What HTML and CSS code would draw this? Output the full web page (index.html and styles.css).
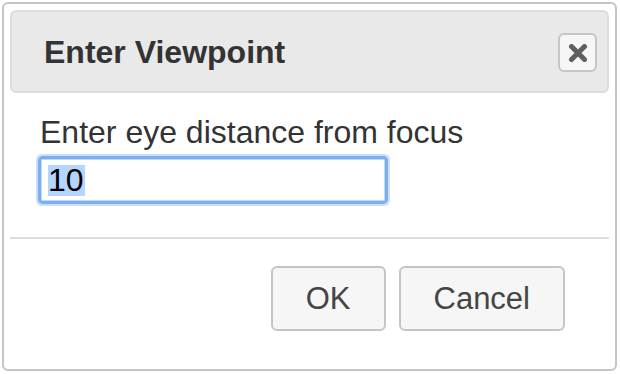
FILE: index.html
```html
<!DOCTYPE html>
<html lang="en">
<head>
  <meta charset="UTF-8" />
  <title>Enter Viewpoint</title>
  <link rel="stylesheet" href="styles.css">
</head>
<body>
  <div class="dialog">
    <div class="titlebar">
      <span class="title">Enter Viewpoint</span>
      <button class="close" title="Close">
        <svg width="20" height="18" viewBox="0 0 20 18">
          <path d="M3.5 2.5 L16.5 15.5 M16.5 2.5 L3.5 15.5" stroke="#5f5f5f" stroke-width="5" stroke-linecap="round" fill="none"/>
        </svg>
      </button>
    </div>

    <div class="content">
      <label class="label" for="eye">Enter eye distance from focus</label>
      <div class="field" id="eye"><span class="sel">10</span></div>
    </div>

    <div class="buttonpane">
      <button class="btn">OK</button>
      <button class="btn">Cancel</button>
    </div>
  </div>
</body>
</html>
```

FILE: styles.css
```css
body {
  margin: 0;
  padding: 2px;
  background: #fff;
  font-family: 'Liberation Sans', Arial, sans-serif;
  color: #333;
}

.dialog {
  width: 615px;
  box-sizing: border-box;
  border: 2px solid #c5c5c5;
  border-radius: 6px;
  padding: 6px;
  background: #fff;
}

.titlebar {
  height: 83px;
  box-sizing: border-box;
  display: flex;
  align-items: center;
  padding: 0 10px 0 32px;
  background: #e9e9e9;
  border: 2px solid #dddddd;
  border-radius: 6px;
}

.title {
  font-size: 32px;
  line-height: 36px;
  font-weight: bold;
  color: #333;
}

.close {
  margin-left: auto;
  margin-top: 2px;
  width: 39px;
  height: 39px;
  padding: 0;
  display: flex;
  align-items: center;
  justify-content: center;
  background: #f6f6f6;
  border: 2px solid #c5c5c5;
  border-radius: 6px;
}

.content {
  padding: 21px 30px 36px 30px;
}

.label {
  display: block;
  font-size: 32px;
  line-height: 36px;
  color: #333;
}

.field {
  margin: 9px 0 0 1px;
  width: 344px;
  height: 42px;
  box-sizing: border-box;
  display: flex;
  align-items: center;
  padding: 0 6px;
  border: 1px solid #c2d8f7;
  box-shadow: 0 0 0 3px #7cadf1, 0 0 0 5px rgba(124, 173, 241, 0.4);
  border-radius: 2px;
  font-size: 32px;
  color: #000;
}

.sel {
  display: inline-block;
  height: 31px;
  line-height: 31px;
  padding-right: 1px;
  background: #b4d5fe;
}

.buttonpane {
  display: flex;
  justify-content: flex-end;
  gap: 13px;
  border-top: 2px solid #dddddd;
  padding: 27px 44px 32px 0;
}

.btn {
  height: 65px;
  padding: 0 33px;
  font-family: 'Liberation Sans', Arial, sans-serif;
  font-size: 31px;
  color: #454545;
  background: #f6f6f6;
  border: 2px solid #c5c5c5;
  border-radius: 6px;
}
```
